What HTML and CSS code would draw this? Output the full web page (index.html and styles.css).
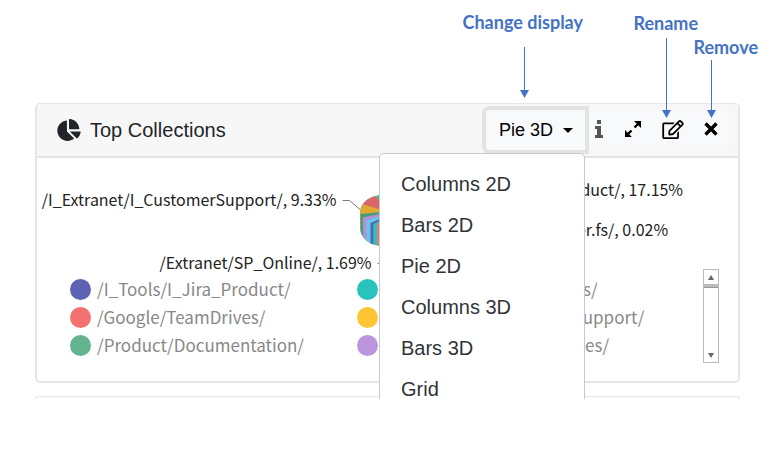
FILE: index.html
```html
<!DOCTYPE html>
<html lang="en">
<head>
<meta charset="utf-8">
<title>Top Collections</title>
<link rel="stylesheet" href="styles.css">
</head>
<body>
<main class="page">
  <div class="note note-display"><span>Change display</span></div>
  <div class="note note-rename"><span>Rename</span></div>
  <div class="note note-remove"><span>Remove</span></div>
  <svg class="arrow arrow-display" width="10" height="52" viewBox="0 0 10 52" aria-hidden="true"><path d="M4.500 0V44" stroke="#4472c4"/><path d="M0 43h9L4.500 51z" fill="#4472c4"/></svg>
  <svg class="arrow arrow-rename" width="10" height="81" viewBox="0 0 10 81" aria-hidden="true"><path d="M4.500 0V73" stroke="#4472c4"/><path d="M0 72h9L4.500 80z" fill="#4472c4"/></svg>
  <svg class="arrow arrow-remove" width="10" height="59" viewBox="0 0 10 59" aria-hidden="true"><path d="M4.500 0V51" stroke="#4472c4"/><path d="M0 50h9L4.500 58z" fill="#4472c4"/></svg>

  <div class="board">
    <section class="card">
      <header class="card-header">
        <svg class="pie-icon" width="24" height="22" viewBox="0 0 544 512" aria-hidden="true"><path fill="#212529" d="M527.800 288H290.500l158 158c6 6 15.800 6.500 21.900.5 38.600-36.300 65.300-86.400 73.300-142.500 1.200-8.500-6.400-16-15.900-16zm-15.800-64.800C503.700 103.700 408.300 8.300 288.800 0c-9.200-.6-16.800 7.100-16.800 16.300V240h223.700c9.200 0 16.900-7.600 16.300-16.800zM224 288V50.700c0-9.500-8.400-17.100-17.800-15.800C86.500 51.800-3.800 156.600.1 281.500 4.100 409.700 114.600 513.600 242.900 512c50.400-.6 97-16.900 135.200-44 7.900-5.600 8.400-17.200 1.600-24.100L224 288z"/></svg>
        <h2 class="card-title">Top Collections</h2>
        <div class="tools">
          <div class="dropdown">
            <button class="display-button" type="button" aria-haspopup="menu" aria-expanded="true">Pie 3D <span class="caret"></span></button>
            <ul class="menu" role="menu">
              <li><button type="button" role="menuitem">Columns 2D</button></li>
              <li><button type="button" role="menuitem">Bars 2D</button></li>
              <li><button type="button" role="menuitem">Pie 2D</button></li>
              <li><button type="button" role="menuitem">Columns 3D</button></li>
              <li><button type="button" role="menuitem">Bars 3D</button></li>
              <li><button type="button" role="menuitem">Grid</button></li>
            </ul>
          </div>
          <button class="tool tool-info" type="button" aria-label="Information"><svg width="8" height="18" viewBox="0 0 8 18"><path fill="#555" d="M2 0h4v4H2zM0 6h6v9h2v3H0v-3h2V9H0z"/></svg></button>
          <button class="tool" type="button" aria-label="Expand"><svg width="18" height="18" viewBox="0 0 18 18"><path d="M10.500 7.500L15 3M7.500 10.500L3 15" stroke="#000" stroke-width="2.400"/><path d="M10 1h7v7zM1 10v7h7z"/></svg></button>
          <button class="tool" type="button" aria-label="Rename"><svg width="22" height="19" viewBox="0 0 576 512"><path d="M402.300 344.900l32-32c5-5 13.700-1.500 13.700 5.700V464c0 26.500-21.500 48-48 48H48c-26.500 0-48-21.500-48-48V112c0-26.500 21.500-48 48-48h273.500c7.100 0 10.700 8.600 5.700 13.700l-32 32c-1.500 1.500-3.500 2.300-5.700 2.300H48v352h352V350.500c0-2.100.8-4.100 2.300-5.600zm156.600-201.800L296.300 405.700l-90.400 10c-26.200 2.900-48.500-19.200-45.600-45.600l10-90.400L432.900 17.100c22.900-22.900 59.900-22.900 82.700 0l43.200 43.200c22.900 22.900 22.900 60 .1 82.800zM460.100 174L402 115.900 216.200 301.800l-7.300 65.300 65.300-7.300L460.100 174zm64.800-79.700l-43.200-43.200c-4.100-4.100-10.800-4.100-14.800 0L436 82l58.100 58.100 30.900-30.900c4-4.200 4-10.800-.1-14.900z"/></svg></button>
          <button class="tool tool-remove" type="button" aria-label="Remove"><svg width="14" height="14" viewBox="0 0 14 14"><path d="M1.500 1.500l11 11M12.500 1.500l-11 11" stroke="#000" stroke-width="3.400"/></svg></button>
        </div>
      </header>
      <div class="card-body">
        <svg class="chart" width="702" height="117" viewBox="37 158 702 117" role="img" aria-label="Share of documents by collection">
          <defs><clipPath id="pie"><path d="M360.500 212C361 203 370 195 384 195h14c12 0 20 8 21 18v14c0 12-10 19-24 19h-12c-13 0-22-8-22.500-18z"/></clipPath></defs>
          <g clip-path="url(#pie)">
            <rect x="355" y="190" width="70" height="60" fill="#62b58f"/>
            <path d="M374 190h46v22h-30z" fill="#29c3be"/>
            <path d="M355 207L366 198 375 195.500 390 212z" fill="#d9646a"/>
            <path d="M355 205L362 204 390 212 361 214.500v15H355z" fill="#e0a92f"/>
            <path d="M361 214l29-3v4l-26 4v24h-3z" fill="#4b9d7a"/>
            <path d="M363.500 217.500L390 212v3l-21.500 6v24l-5-4z" fill="#b48fd9"/>
            <path d="M367 220.500L390 213v3l-18.500 7v24l-4.500-3z" fill="#62c9ed"/>
            <path d="M371 223l19-8v3l-16 7v24h-3z" fill="#5d62b5"/>
            <path d="M374 224l16-8v3l-12 6v24h-4z" fill="#29c3be"/>
            <path d="M377.500 224l12.500-7v32h-12.500z" fill="#f2726f"/>
          </g>
          <path d="M343 200.500h7l10.500 9M378 263.500h5" fill="none" stroke="#777"/>
          <text class="chart-label" x="337" y="206" text-anchor="end">/I_Extranet/I_CustomerSupport/, 9.33%</text>
          <text class="chart-label" x="372" y="269" text-anchor="end">/Extranet/SP_Online/, 1.69%</text>
          <text class="chart-label" x="684" y="196" text-anchor="end">/I_Jira_Product/, 17.15%</text>
          <text class="chart-label" x="669" y="236" text-anchor="end">/Server.fs/, 0.02%</text>
        </svg>
        <div class="legend">
          <ul class="legend-list">
            <li><i class="dot indigo"></i>/I_Tools/I_Jira_Product/</li>
            <li><i class="dot teal"></i>/I_Extranet/MyDocuments/</li>
            <li><i class="dot red"></i>/Google/TeamDrives/</li>
            <li><i class="dot yellow"></i>/I_Extranet/I_Customer Support/</li>
            <li><i class="dot green"></i>/Product/Documentation/</li>
            <li><i class="dot purple"></i>/I_Extranet/My_SharedFiles/</li>
          </ul>
          <div class="scroller">
            <button type="button" aria-label="Scroll up"><span class="tri-up"></span></button>
            <span class="thumb"></span>
            <button class="scroll-down" type="button" aria-label="Scroll down"><span class="tri-down"></span></button>
          </div>
        </div>
      </div>
    </section>
    <div class="card next-card"></div>
  </div>
</main>
</body>
</html>
```
FILE: styles.css
```css
* { box-sizing: border-box; }
body { margin: 0; background: #fff; color: #212529; font-family: "Liberation Sans", Arial, sans-serif; }
button { border: 0; padding: 0; background: none; color: inherit; font: inherit; }
ul { margin: 0; padding: 0; list-style: none; }
.page { position: relative; padding: 103px 44px 50px 35px; }

.note { position: absolute; color: #4472c4; font: bold 18px/20px Lato, sans-serif; white-space: nowrap; }
.note-display { top: 12px; right: 201px; }
.note-rename { top: 13px; right: 86px; }
.note-remove { top: 37px; right: 26px; }
.arrow { position: absolute; z-index: 3; }
.arrow-display { top: 47px; right: 254px; }
.arrow-rename { top: 38px; right: 112px; }
.arrow-remove { top: 60px; right: 67px; }

.board { overflow: hidden; }
.card { border: 1px solid #e6e6e6; border-width: 1px 2px 2px; border-radius: 5px; background: #fff; }
.next-card { height: 3px; margin-top: 13px; border-bottom: 0; border-radius: 5px 5px 0 0; }
.card-header { display: flex; align-items: center; height: 54px; padding: 0 9px 0 20px; background: #f7f7f7; border-bottom: 2px solid #e3e3e3; border-radius: 4px 4px 0 0; }
.card-title { margin: 0 0 0 9px; font-size: 20px; font-weight: 400; line-height: 24px; }
.tools { display: flex; align-items: center; height: 40px; margin-left: auto; background: #f8f9fa; border-radius: 4px; color: #000; }
.dropdown { position: relative; z-index: 2; }
.display-button { display: flex; align-items: center; gap: 10px; height: 40px; padding: 0 12px 0 13px; background: #f8f9fa; border-radius: 4px 0 0 4px; box-shadow: 0 0 0 4px #e3e3e3; font-size: 18px; }
.caret { border: 5px solid transparent; border-top-color: #000; border-bottom: 0; }
.tool { display: grid; place-items: center; width: 40px; height: 40px; padding-bottom: 2px; }
.tool-info { width: 28px; }
.tool-remove { width: 36px; }
.menu { position: absolute; top: 43px; right: 0; width: 206px; padding: 10px 0; background: #fff; border: 1px solid #c8c8c8; border-radius: 5px; }
.menu button { display: block; width: 100%; padding: 0 21px; font-size: 20px; line-height: 41px; text-align: left; color: #303439; }

.card-body { padding-bottom: 18px; }
.chart { display: block; max-width: 100%; }
.chart-label { font: 16px "Noto Sans CJK SC", sans-serif; fill: #222; }
.legend { display: flex; justify-content: space-between; align-items: flex-start; height: 88px; padding: 0 19px 0 33px; }
.legend-list { display: grid; grid-template-columns: 287px 1fr; font: 17px/28px "Noto Sans CJK SC", sans-serif; color: #888; }
.legend-list li { display: flex; align-items: center; gap: 6px; white-space: nowrap; }
.dot { width: 21px; height: 21px; border-radius: 50%; }
.indigo { background: #5d62b5; }
.teal { background: #29c3be; }
.red { background: #f2726f; }
.yellow { background: #ffc533; }
.green { background: #62b58f; }
.purple { background: #bc95df; }
.scroller { display: flex; flex-direction: column; width: 16px; height: 94px; margin-top: -6px; border: 1px solid #bbb; background: #fff; }
.scroller button { display: grid; place-items: center; height: 14px; }
.thumb { height: 4px; background: #bbb; border-bottom: 1px solid #999; }
.scroller .scroll-down { margin-top: auto; }
.tri-up, .tri-down { border: 3px solid transparent; }
.tri-up { border-bottom: 5px solid #666; border-top: 0; }
.tri-down { border-top: 5px solid #666; border-bottom: 0; }
```
